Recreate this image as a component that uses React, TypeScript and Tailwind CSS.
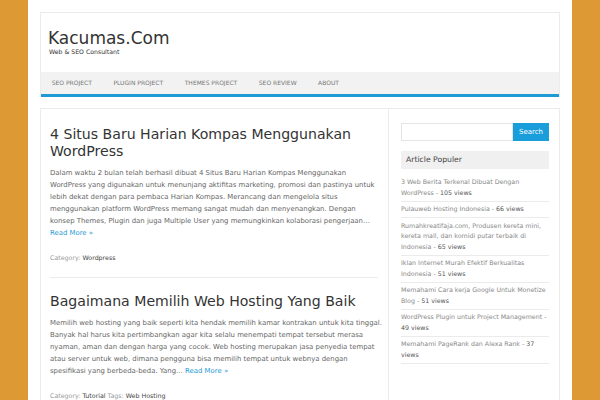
const nav = ["SEO PROJECT", "PLUGIN PROJECT", "THEMES PROJECT", "SEO REVIEW", "ABOUT"];

const popular = [
  { lines: ["3 Web Berita Terkenal Dibuat Dengan", "WordPress"], views: "105 views" },
  { lines: ["Pulauweb Hosting Indonesia"], views: "66 views" },
  { lines: ["Rumahkreatifaja.com, Produsen kereta mini,", "kereta mall, dan komidi putar terbaik di", "Indonesia"], views: "65 views" },
  { lines: ["Iklan Internet Murah Efektif Berkualitas", "Indonesia"], views: "51 views" },
  { lines: ["Memahami Cara kerja Google Untuk Monetize", "Blog"], views: "51 views" },
];

function Lines({ lines }: { lines: string[] }) {
  return (
    <>
      {lines.map((l, i) => (
        <span key={i}>
          {l}
          {i < lines.length - 1 && <br />}
        </span>
      ))}
    </>
  );
}

export default function App() {
  return (
    <div className="w-[600px] h-[400px] overflow-hidden bg-[#dd9933] font-['DejaVu_Sans',sans-serif]">
      <div className="mx-[28px] w-[544px] h-full bg-white px-[12px] pt-[12px]">
        {/* Header */}
        <div className="w-[520px] border-x border-t border-[#ebebeb]">
          <div className="h-[59px] pl-[7px] pt-[15px]">
            <div className="text-[17px] leading-[20px] text-[#333]">Kacumas.Com</div>
            <div className="text-[6.2px] leading-[8px] text-[#333] pl-[1px]">Web &amp; SEO Consultant</div>
          </div>
          <div className="flex h-[25px] bg-[#f2f2f2] border-b-[3px] border-[#1e9bd7]">
            {nav.map((n) => (
              <div key={n} className="px-[10.75px] pt-[7px] text-[6px] leading-[8px] text-[#777]">
                {n}
              </div>
            ))}
          </div>
        </div>

        <div className="flex mt-[11px]">
          {/* Main */}
          <div className="w-[349px] h-[300px] border border-[#ebebeb] pl-[9px] pt-[17px] whitespace-nowrap">
            <h1 className="text-[14.1px] leading-[16.5px] text-[#333]">
              4 Situs Baru Harian Kompas Menggunakan
              <br />
              WordPress
            </h1>
            <p className="mt-[8px] text-[6.9px] leading-[12.1px] text-[#666]">
              Dalam waktu 2 bulan telah berhasil dibuat 4 Situs Baru Harian Kompas Menggunakan
              <br />
              WordPress yang digunakan untuk menunjang aktifitas marketing, promosi dan pastinya untuk
              <br />
              lebih dekat dengan para pembaca Harian Kompas. Merancang dan mengelola situs
              <br />
              menggunakan platform WordPress memang sangat mudah dan menyenangkan. Dengan
              <br />
              konsep Themes, Plugin dan juga Multiple User yang memungkinkan kolaborasi pengerjaan…
              <br />
              <span className="text-[#1e9bd7]">Read More »</span>
            </p>
            <div className="mt-[13px] mr-[10px] pb-[14px] border-b border-[#ebebeb] text-[6.3px] leading-[10px] text-[#999]">
              Category: <span className="text-[#444]">Wordpress</span>
            </div>
            <h1 className="mt-[15px] text-[14.1px] leading-[16.5px] text-[#333]">
              Bagaimana Memilih Web Hosting Yang Baik
            </h1>
            <p className="mt-[8px] text-[6.9px] leading-[12.1px] text-[#666]">
              Memilih web hosting yang baik seperti kita hendak memilih kamar kontrakan untuk kita tinggal.
              <br />
              Banyak hal harus kita pertimbangkan agar kita selalu menempati tempat tersebut merasa
              <br />
              nyaman, aman dan dengan harga yang cocok. Web hosting merupakan jasa penyedia tempat
              <br />
              atau server untuk web, dimana pengguna bisa memilih tempat untuk webnya dengan
              <br />
              spesifikasi yang berbeda-beda. Yang… <span className="text-[#1e9bd7]">Read More »</span>
            </p>
            <div className="mt-[13px] text-[6.3px] leading-[10px] text-[#999]">
              Category: <span className="text-[#444]">Tutorial</span> Tags: <span className="text-[#444]">Web Hosting</span>
            </div>
          </div>

          {/* Sidebar */}
          <div className="w-[171px] h-[300px] border-y border-r border-[#ebebeb] pl-[12px] pr-[10px] pt-[14px] whitespace-nowrap">
            <div className="flex h-[18px]">
              <div className="w-[112px] border border-[#e5e5e5]" />
              <div className="flex-1 bg-[#1a9ddb] text-white text-[7px] leading-[18px] text-center">Search</div>
            </div>
            <div className="mt-[10px] h-[18px] bg-[#f0f0f0] px-[5px] text-[7.7px] leading-[18px] text-[#444]">
              Article Populer
            </div>
            <ul className="mt-[5.5px]">
              {popular.map((p, i) => (
                <li key={i} className="border-b border-[#ebebeb] py-[2.5px] text-[6.3px] leading-[10.5px] text-[#888]">
                  <Lines lines={p.lines} /> - <span className="text-[#555]">{p.views}</span>
                </li>
              ))}
              <li className="border-b border-[#ebebeb] py-[2.5px] text-[6.3px] leading-[10.5px] text-[#888]">
                WordPress Plugin untuk Project Management -
                <br />
                <span className="text-[#555]">49 views</span>
              </li>
              <li className="border-b border-[#ebebeb] py-[2.5px] text-[6.3px] leading-[10.5px] text-[#888]">
                Memahami PageRank dan Alexa Rank - <span className="text-[#555]">37</span>
                <br />
                <span className="text-[#555]">views</span>
              </li>
            </ul>
          </div>
        </div>
      </div>
    </div>
  );
}
